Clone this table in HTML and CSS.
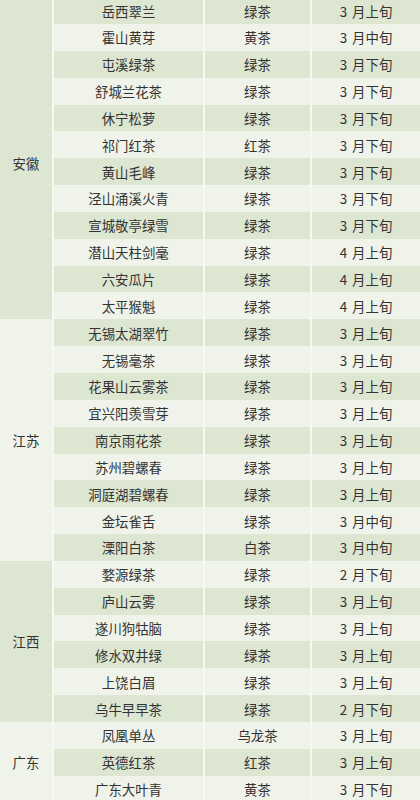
FILE: index.html
```html
<!DOCTYPE html>
<html lang="zh-CN">
<head>
<meta charset="utf-8">
<title>名茶采摘时间</title>
<link rel="stylesheet" href="styles.css">
</head>
<body>
<div class="table">
  <div class="prov dark span12">安徽</div>
  <div class="c dark">岳西翠兰</div><div class="c dark">绿茶</div><div class="c dark">3 月上旬</div>
  <div class="c">霍山黄芽</div><div class="c">黄茶</div><div class="c">3 月中旬</div>
  <div class="c dark">屯溪绿茶</div><div class="c dark">绿茶</div><div class="c dark">3 月下旬</div>
  <div class="c">舒城兰花茶</div><div class="c">绿茶</div><div class="c">3 月下旬</div>
  <div class="c dark">休宁松萝</div><div class="c dark">绿茶</div><div class="c dark">3 月下旬</div>
  <div class="c">祁门红茶</div><div class="c">红茶</div><div class="c">3 月下旬</div>
  <div class="c dark">黄山毛峰</div><div class="c dark">绿茶</div><div class="c dark">3 月下旬</div>
  <div class="c">泾山涌溪火青</div><div class="c">绿茶</div><div class="c">3 月下旬</div>
  <div class="c dark">宣城敬亭绿雪</div><div class="c dark">绿茶</div><div class="c dark">3 月下旬</div>
  <div class="c">潜山天柱剑毫</div><div class="c">绿茶</div><div class="c">4 月上旬</div>
  <div class="c dark">六安瓜片</div><div class="c dark">绿茶</div><div class="c dark">4 月上旬</div>
  <div class="c">太平猴魁</div><div class="c">绿茶</div><div class="c">4 月上旬</div>

  <div class="prov span9">江苏</div>
  <div class="c dark">无锡太湖翠竹</div><div class="c dark">绿茶</div><div class="c dark">3 月上旬</div>
  <div class="c">无锡毫茶</div><div class="c">绿茶</div><div class="c">3 月上旬</div>
  <div class="c dark">花果山云雾茶</div><div class="c dark">绿茶</div><div class="c dark">3 月上旬</div>
  <div class="c">宜兴阳羡雪芽</div><div class="c">绿茶</div><div class="c">3 月上旬</div>
  <div class="c dark">南京雨花茶</div><div class="c dark">绿茶</div><div class="c dark">3 月上旬</div>
  <div class="c">苏州碧螺春</div><div class="c">绿茶</div><div class="c">3 月上旬</div>
  <div class="c dark">洞庭湖碧螺春</div><div class="c dark">绿茶</div><div class="c dark">3 月上旬</div>
  <div class="c">金坛雀舌</div><div class="c">绿茶</div><div class="c">3 月中旬</div>
  <div class="c dark">溧阳白茶</div><div class="c dark">白茶</div><div class="c dark">3 月中旬</div>

  <div class="prov dark span6">江西</div>
  <div class="c">婺源绿茶</div><div class="c">绿茶</div><div class="c">2 月下旬</div>
  <div class="c dark">庐山云雾</div><div class="c dark">绿茶</div><div class="c dark">3 月上旬</div>
  <div class="c">遂川狗牯脑</div><div class="c">绿茶</div><div class="c">3 月上旬</div>
  <div class="c dark">修水双井绿</div><div class="c dark">绿茶</div><div class="c dark">3 月上旬</div>
  <div class="c">上饶白眉</div><div class="c">绿茶</div><div class="c">3 月上旬</div>
  <div class="c dark">乌牛早早茶</div><div class="c dark">绿茶</div><div class="c dark">2 月下旬</div>

  <div class="prov span3">广东</div>
  <div class="c">凤凰单丛</div><div class="c">乌龙茶</div><div class="c">3 月上旬</div>
  <div class="c dark">英德红茶</div><div class="c dark">红茶</div><div class="c dark">3 月上旬</div>
  <div class="c">广东大叶青</div><div class="c">黄茶</div><div class="c">3 月下旬</div>
</div>
</body>
</html>
```

FILE: styles.css
```css
html, body {
  margin: 0;
  padding: 0;
  background: #eff3ea;
  overflow: hidden;
}

.table {
  display: grid;
  grid-template-columns: 52px 149px 105px 1fr;
  grid-auto-rows: 26.85px;
  column-gap: 2px;
  margin-top: -2.85px;
  background: #f6f8f3;
  font-family: "Noto Sans CJK SC", "Noto Sans", sans-serif;
  font-size: 13.4px;
  color: #333333;
}

.c, .prov {
  display: flex;
  align-items: center;
  justify-content: center;
  background: #eff3ea;
  white-space: nowrap;
  word-spacing: 2px;
}

.dark {
  background: #dde6d1;
}

.prov {
  grid-column: 1;
}

.span12 { grid-row: span 12; padding-top: 10px; }
.span9 { grid-row: span 9; }
.span6 { grid-row: span 6; }
.span3 { grid-row: span 3; }
```
